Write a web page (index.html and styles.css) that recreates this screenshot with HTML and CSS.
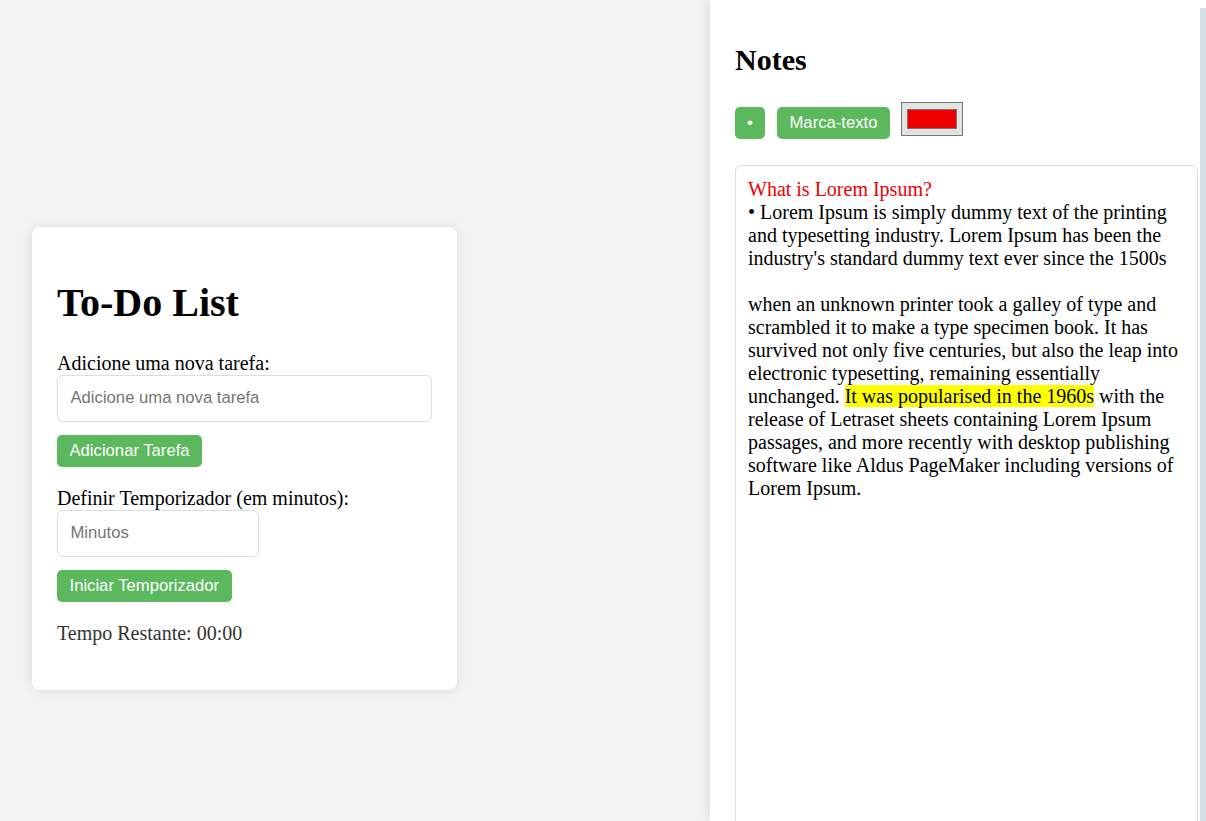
FILE: index.html
```html
<!DOCTYPE html>
<html lang="pt">
<head>
<meta charset="utf-8">
<title>To-Do List</title>
<link rel="stylesheet" href="styles.css">
</head>
<body>
<div class="page">
  <main class="main">
    <section class="card">
      <h1 class="title">To-Do List</h1>
      <label class="label" for="task">Adicione uma nova tarefa:</label>
      <input class="field field-wide" id="task" type="text" placeholder="Adicione uma nova tarefa">
      <button class="btn btn-block">Adicionar Tarefa</button>
      <label class="label" for="mins">Definir Temporizador (em minutos):</label>
      <input class="field field-narrow" id="mins" type="text" placeholder="Minutos">
      <button class="btn btn-block">Iniciar Temporizador</button>
      <p class="timer">Tempo Restante: 00:00</p>
    </section>
  </main>
  <aside class="notes">
    <h2 class="notes-title">Notes</h2>
    <div class="toolbar">
      <button class="btn tool tool-bullet">•</button>
      <button class="btn tool tool-mark">Marca-texto</button>
      <span class="color-input"><span class="swatch"></span></span>
    </div>
    <div class="editor" contenteditable="true">
      <div class="red">What is Lorem Ipsum?</div>
      <div>• Lorem Ipsum is simply dummy text of the printing and typesetting industry. Lorem Ipsum has been the industry's standard dummy text ever since the 1500s</div>
      <div><br></div>
      <div>when an unknown printer took a galley of type and scrambled it to make a type specimen book. It has survived not only five centuries, but also the leap into electronic typesetting, remaining essentially unchanged. <span class="hl">It was popularised in the 1960s</span> with the release of Letraset sheets containing Lorem Ipsum passages, and more recently with desktop publishing software like Aldus PageMaker including versions of Lorem Ipsum.</div>
    </div>
  </aside>
  <div class="scrollbar"><div class="thumb"></div></div>
</div>
</body>
</html>
```

FILE: styles.css
```css
html, body {
  margin: 0;
  padding: 0;
  height: 100%;
}
body {
  background: #f3f3f3;
  font-family: "Liberation Serif", "Times New Roman", serif;
  font-size: 20px;
  color: #000;
  overflow: hidden;
}
.page {
  display: flex;
  height: 100vh;
}
.main {
  flex: 1;
}
.card {
  width: 425px;
  box-sizing: border-box;
  margin: 227px 0 0 32px;
  padding: 25px;
  background: #fff;
  border-radius: 8px;
  box-shadow: 0 0 12px rgba(0, 0, 0, 0.1);
}
.title {
  font-size: 40px;
  font-weight: bold;
  margin: 26.8px 0 26px 0;
}
.label {
  display: block;
}
.field {
  display: block;
  box-sizing: border-box;
  font-family: "Liberation Sans", Arial, sans-serif;
  font-size: 16.67px;
  padding: 12.5px;
  border: 1px solid #ddd;
  border-radius: 6px;
  margin: 0 0 13px 0;
  color: #000;
  background: #fff;
  outline: none;
}
.field::placeholder {
  color: #757575;
}
.field-wide {
  width: 375px;
}
.field-narrow {
  width: 202px;
}
.btn {
  font-family: "Liberation Sans", Arial, sans-serif;
  font-size: 16.67px;
  color: #fff;
  background: #5cb85c;
  border: none;
  border-radius: 5px;
  padding: 6.5px 12.5px;
  line-height: 19px;
  cursor: pointer;
}
.btn-block {
  display: block;
  margin: 0 0 20px 0;
}
.timer {
  margin: 0 0 20px 0;
  color: #333;
}
.notes {
  width: 490px;
  height: 100vh;
  box-sizing: border-box;
  padding: 18px 0 0 25px;
  background: #fff;
  box-shadow: -3px 0 12px rgba(0, 0, 0, 0.08);
  overflow: hidden;
}
.notes-title {
  font-size: 30px;
  font-weight: bold;
  margin: 24.9px 0;
}
.toolbar {
  display: flex;
  align-items: flex-start;
  height: 66px;
  margin-top: -2.9px;
}
.tool {
  margin-top: 8px;
}
.tool-bullet {
  width: 30px;
  padding-left: 0;
  padding-right: 0;
  margin-right: 12px;
}
.tool-mark {
  margin-right: 11px;
}
.color-input {
  display: flex;
  align-items: center;
  justify-content: center;
  width: 62px;
  height: 34px;
  margin-top: 3px;
  box-sizing: border-box;
  background: #e3e3e3;
  border: 1px solid #767676;
}
.swatch {
  display: block;
  width: 50px;
  height: 20px;
  box-sizing: border-box;
  background: #ee0000;
  border: 1px solid #777;
}
.editor {
  width: 463px;
  height: 700px;
  box-sizing: border-box;
  padding: 12px;
  border: 1px solid #ddd;
  border-radius: 6px;
  outline: none;
}
.red {
  color: #ee0000;
}
.hl {
  background: #ffff00;
}
.scrollbar {
  width: 6px;
  height: 100vh;
  background: #fff;
  display: flex;
  flex-direction: column;
}
.thumb {
  flex: 1;
  margin-top: 8px;
  background: #d3dde5;
}
```
